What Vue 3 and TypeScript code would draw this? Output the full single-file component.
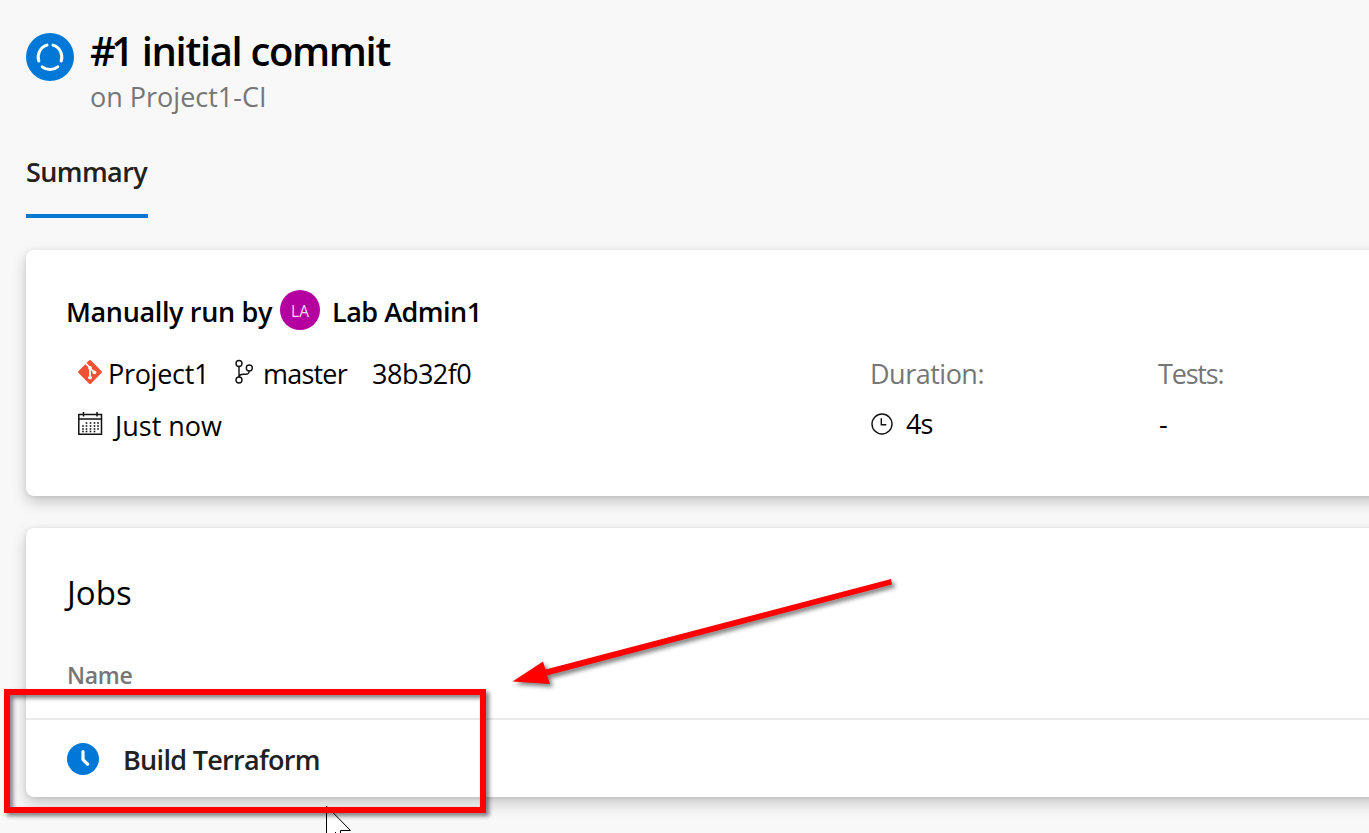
<script setup lang="ts">
interface Run {
  id: number
  title: string
  pipeline: string
  author: string
  initials: string
  repo: string
  branch: string
  commit: string
  started: string
  duration: string
  tests: string
}

const run: Run = {
  id: 1,
  title: 'initial commit',
  pipeline: 'Project1-CI',
  author: 'Lab Admin1',
  initials: 'LA',
  repo: 'Project1',
  branch: 'master',
  commit: '38b32f0',
  started: 'Just now',
  duration: '4s',
  tests: '-',
}

const jobs: string[] = ['Build Terraform']
const dotRows: { y: number; xs: number[] }[] = [
  { y: 11, xs: [8.5, 12.5, 16.5, 20] },
  { y: 14, xs: [5, 8.5, 12.5, 16.5, 20] },
  { y: 17, xs: [5, 8.5, 12.5, 16.5, 20] },
  { y: 19.5, xs: [5, 8.5, 12.5, 16.5] },
]
</script>

<template>
  <main class="page">
    <header class="head">
      <svg class="status" viewBox="0 0 48 48">
        <circle cx="24" cy="24" r="24" fill="#0078d7" />
        <g fill="none" stroke="#fff" stroke-width="3" stroke-linecap="round">
          <path d="M21 12.1A12.5 12.5 0 0 0 12.8 28" />
          <path d="M27 12.1A12.5 12.5 0 0 1 35.2 28" />
          <path d="M16.2 33.8A12.5 12.5 0 0 0 31.8 33.8" />
        </g>
      </svg>
      <div class="head-text">
        <h1 class="t title"><span class="num">#{{ run.id }}</span> {{ run.title }}</h1>
        <div class="t sub">on {{ run.pipeline }}</div>
      </div>
    </header>

    <nav class="tabs"><span class="t tab">Summary</span></nav>

    <section class="card summary">
      <div class="by">
        <span class="t by-label">Manually run by</span>
        <span class="avatar">{{ run.initials }}</span>
        <span class="t by-name">{{ run.author }}</span>
      </div>
      <div class="cols">
        <div class="col source">
          <div class="row">
            <svg class="git" viewBox="0 0 24 24">
              <path d="M10.9.6a1.6 1.6 0 0 1 2.2 0l10.3 10.3a1.6 1.6 0 0 1 0 2.2L13.1 23.4a1.6 1.6 0 0 1-2.2 0L.6 13.1a1.6 1.6 0 0 1 0-2.2z" fill="#f05033" />
              <g stroke="#fff" stroke-width="1.7" fill="none"><path d="M7.6 3.4 12 7.7V17.5M12 8l4.5 4.5" /></g>
              <g fill="#fff"><circle cx="12" cy="7.8" r="1.9" /><circle cx="12" cy="17.6" r="1.9" /><circle cx="16.4" cy="12.3" r="1.9" /></g>
            </svg>
            <span class="t repo">{{ run.repo }}</span>
            <svg class="branch" viewBox="0 0 20 26" fill="none" stroke="#111" stroke-width="1.4">
              <circle cx="5" cy="4.5" r="3" />
              <circle cx="15.3" cy="9" r="3" />
              <circle cx="5" cy="21" r="3" />
              <path d="M5 7.5v10.5M15.3 12c-.3 2.5-1.5 3.300-3.600 3.300H9c-2.300 0-3.600.9-4 2.700" />
            </svg>
            <span class="t branch-name">{{ run.branch }}</span>
            <span class="t hash">{{ run.commit }}</span>
          </div>
          <div class="row second">
            <svg class="cal" viewBox="0 0 25 24">
              <path d="M.8 2.5h22.700v19.700H.8zM.8 7h22.700M5.500 0v4.500M19 0v4.500" fill="none" stroke="#111" stroke-width="1.5" />
              <g v-for="r in dotRows" :key="r.y" fill="#111">
                <rect v-for="x in r.xs" :key="x" :x="x - 0.8" :y="r.y - 0.8" width="1.6" height="1.6" />
              </g>
            </svg>
            <span class="t started">{{ run.started }}</span>
          </div>
        </div>
        <div class="col duration">
          <div class="t label dur-label">Duration:</div>
          <div class="value">
            <svg class="clock" viewBox="0 0 22 22" fill="none" stroke="#111" stroke-width="1.4">
              <circle cx="11" cy="11" r="10" />
              <path d="M10.3 5.2v6.6h5" />
            </svg>
            <span class="t dur">{{ run.duration }}</span>
          </div>
        </div>
        <div class="col">
          <div class="t label tests-label">Tests:</div>
          <div class="value"><span class="t tests">{{ run.tests }}</span></div>
        </div>
      </div>
    </section>

    <section class="card jobs">
      <h2 class="t jobs-title">Jobs</h2>
      <div class="t name-head">Name</div>
      <div v-for="job in jobs" :key="job" class="job">
        <svg class="job-icon" viewBox="0 0 32 32">
          <circle cx="16" cy="16" r="16" fill="#0078d7" />
          <path d="M16 8.6v8l4.6 4.6" fill="none" stroke="#fff" stroke-width="3.2" stroke-linecap="round" stroke-linejoin="round" />
        </svg>
        <span class="t job-name">{{ job }}</span>
      </div>
    </section>

    <svg class="marks" viewBox="0 0 1369 833">
      <path d="M326.5 806v40l9-11h15.500L326.500 806z" fill="#fff" />
      <path d="M326.500 806V833M327 806.500L350.500 830.500H340.500V833M336 832l-3 3" fill="none" stroke="#000" stroke-width="1" />
      <g class="marker">
        <rect x="7" y="692" width="476" height="118" fill="none" stroke="#f00" stroke-width="6" />
        <path d="M891 579L892 584.500L547 675.500L550 684L512.500 681.500L543 661.500L545.500 669.500z" fill="#f00" />
      </g>
    </svg>
  </main>
</template>

<style>
html,
body {
  overflow: hidden;
}
</style>

<style scoped>
.page {
  position: relative;
  box-sizing: border-box;
  width: 1369px;
  height: 833px;
  overflow: hidden;
  padding: 32px 0 0 26px;
  background: #f8f8f8;
  color: #000;
  font-family: "Open Sans", "Noto Sans", sans-serif;
  font-size: 27px;
}
.t {
  display: block;
  margin: 0;
  line-height: 42px;
  white-space: nowrap;
}
.head {
  display: flex;
  height: 122px;
}
.status {
  width: 48px;
  height: 48px;
  margin-top: 1px;
}
.head-text {
  margin-left: 16px;
}
.title {
  font-size: 40px;
  font-weight: 600;
  letter-spacing: -1.35px;
  line-height: 38px;
}
.num {
  margin-right: 3px;
  letter-spacing: -4.5px;
}
.sub {
  margin-top: 6px;
  color: #767676;
}
.tabs {
  display: flex;
  height: 64px;
  margin-top: -3px;
}
.tab {
  box-sizing: border-box;
  width: 122px;
  height: 67px;
  border-bottom: 4px solid #0078d7;
  color: #212121;
  font-weight: 600;
  letter-spacing: -0.6px;
}
.card {
  box-sizing: border-box;
  width: 1400px;
  border-radius: 8px;
  background: #fff;
  box-shadow: 0 6px 15px rgba(0, 0, 0, 0.2), 0 1px 4px rgba(0, 0, 0, 0.09);
}
.summary {
  height: 246px;
  margin-top: 35px;
  padding: 40px 0 0 41px;
}
.by {
  display: flex;
  height: 40px;
  align-items: center;
}
.by .t {
  padding-top: 4px;
  font-weight: 600;
  letter-spacing: -0.35px;
}
.by-label {
  width: 214px;
  margin-left: -1px;
}
.by .by-name {
  letter-spacing: -0.5px;
}
.avatar {
  width: 40px;
  height: 40px;
  margin-right: 12px;
  border-radius: 50%;
  background: #b4009e;
  color: #f6d8f2;
  font-size: 15.5px;
  line-height: 42px;
  text-align: center;
}
.cols {
  display: flex;
  margin-top: 23px;
}
.source {
  width: 803px;
  flex: none;
}
.duration {
  width: 288px;
  flex: none;
}
.row,
.value {
  display: flex;
  height: 42px;
  align-items: center;
}
.second {
  margin-top: 10px;
}
.value {
  margin-top: 8px;
}
.git {
  width: 24px;
  height: 24px;
  margin: -4px 6px 0 11px;
}
.repo {
  width: 126px;
  letter-spacing: -0.3px;
}
.branch {
  width: 20px;
  height: 26px;
  margin: -4px 9px 0 0;
}
.branch-name {
  width: 109px;
  letter-spacing: -0.8px;
}
.hash {
  letter-spacing: -0.5px;
}
.cal {
  width: 25px;
  height: 24px;
  margin: -5px 12px 0 11px;
}
.label {
  color: #767676;
}
.dur-label {
  letter-spacing: -0.5px;
}
.tests-label {
  letter-spacing: -1.2px;
}
.tests {
  padding-left: 1px;
}
.clock {
  width: 22px;
  height: 22px;
  margin: 0 13px 0 1px;
}
.dur {
  letter-spacing: -1px;
}
.jobs {
  height: 269px;
  margin-top: 32px;
  padding-top: 44px;
}
.jobs-title {
  margin-left: 41px;
  font-size: 33px;
  font-weight: 400;
}
.name-head {
  margin: 40px 0 0 41px;
  color: #767676;
  font-size: 23px;
  font-weight: 600;
  letter-spacing: -0.3px;
}
.job {
  display: flex;
  height: 78px;
  align-items: center;
  margin-top: 22px;
  padding-left: 41px;
  border-top: 2px solid #eaeaea;
}
.job-icon {
  width: 32px;
  height: 32px;
  margin-right: 24px;
}
.job-name {
  padding-top: 2px;
  color: #212121;
  font-weight: 600;
  letter-spacing: -0.7px;
}
.marks {
  position: absolute;
  top: 0;
  left: 0;
  width: 1369px;
  height: 833px;
}
.marker {
  filter: drop-shadow(3px 3px 2px rgba(0, 0, 0, 0.5));
}
</style>
